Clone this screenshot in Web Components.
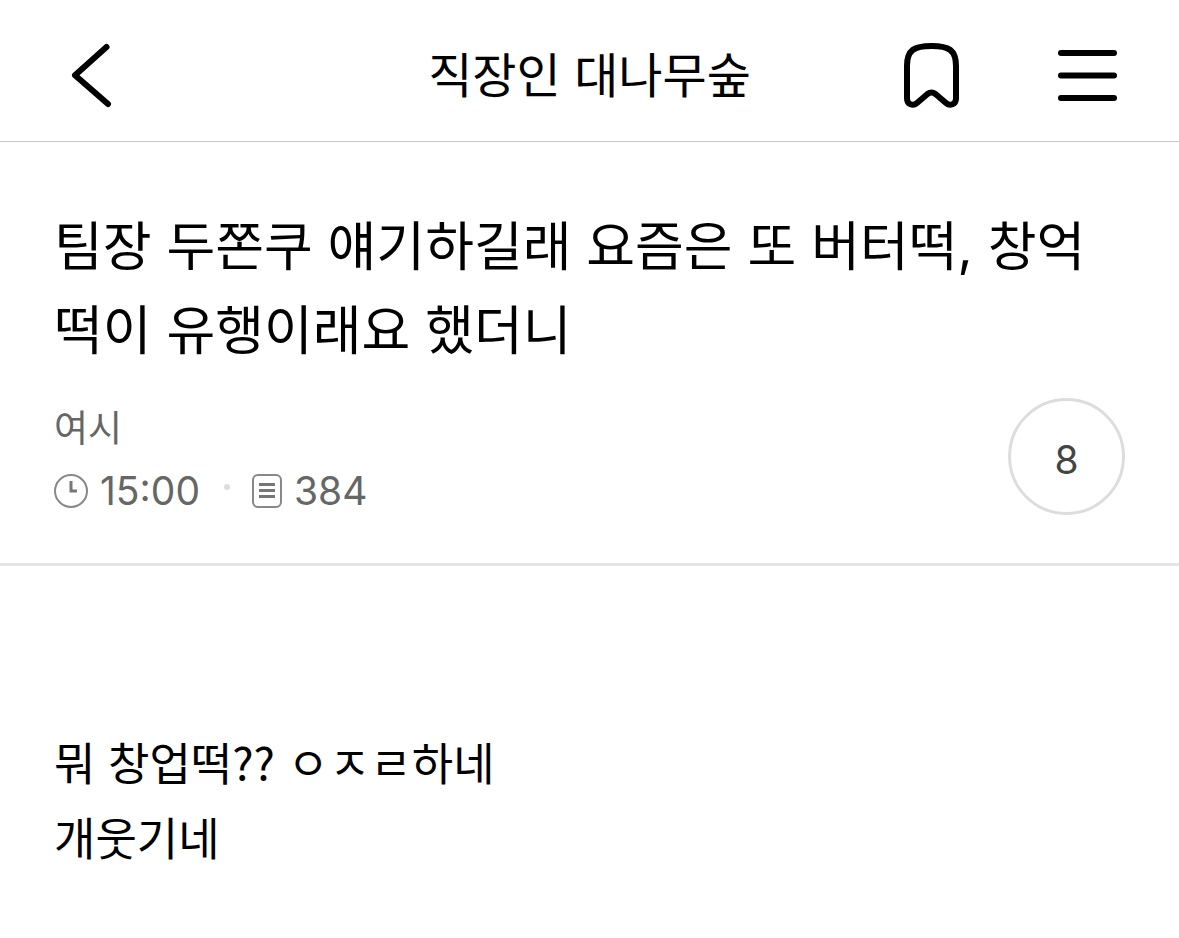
<!DOCTYPE html>
<html lang="ko">
<head>
<meta charset="utf-8">
<meta name="viewport" content="width=device-width, initial-scale=1">
<title>직장인 대나무숲</title>
<style>
    body {
        margin: 0;
        background: #fff;
        color: #000;
        font-family: Inter, "Noto Sans CJK KR", sans-serif;
    }
</style>
</head>
<body>
<board-header>직장인 대나무숲</board-header>
<main>
    <post-heading comments="8">
        팀장 두쫀쿠 얘기하길래 요즘은 또 버터떡, 창억떡이 유행이래요 했더니
        <span slot="author">여시</span>
        <time slot="time">15:00</time>
        <span slot="views">384</span>
    </post-heading>
    <post-body>
        <p>뭐 창업떡?? ㅇㅈㄹ하네</p>
        <p>개웃기네</p>
    </post-body>
</main>

<script>
class BoardHeader extends HTMLElement {

    constructor() {
        super();
        this.shadowDOM = this.attachShadow({mode: 'open'});
    }

    connectedCallback() {
        this.render();
    }

    render() {
        this.shadowDOM.innerHTML =
        `
        <style>
            * {
                margin: 0;
                padding: 0;
                box-sizing: border-box;
            }
            :host {
                display: block;
                border-bottom: 1px solid #c8c8c8;
            }
            header {
                display: grid;
                grid-template-columns: 1fr auto 1fr;
                align-items: center;
                padding: 32px 54px 21px;
            }
            h1 {
                font-size: 48px;
                font-weight: 400;
                line-height: 88px;
            }
            .actions {
                display: flex;
                justify-content: flex-end;
                gap: 76px;
            }
            button {
                display: block;
                border: 0;
                background: none;
                color: inherit;
                cursor: pointer;
            }
            .back {
                justify-self: start;
            }
            svg {
                display: block;
                fill: none;
                stroke: currentColor;
                stroke-width: 6;
                stroke-linecap: round;
                stroke-linejoin: round;
            }
        </style>

        <header>
            <button class="back" type="button" aria-label="뒤로">
                <svg width="80" height="88" viewBox="0 0 80 88"><path d="M52.5 15 21 43.3l33 28.7"/></svg>
            </button>
            <h1><slot></slot></h1>
            <div class="actions">
                <button type="button" aria-label="북마크">
                    <svg width="80" height="88" viewBox="0 0 80 88"><path d="M18 34C18 18 25 14 42.5 14S67 18 67 34V66.500C67 72.500 61 74.500 57 71L46.500 62Q42.500 59 38.500 62L28 71C24 74.500 18 72.500 18 66.500Z"/></svg>
                </button>
                <button type="button" aria-label="메뉴">
                    <svg width="80" height="88" viewBox="0 0 80 88"><path d="M16 21h53M16 43.500h53M16 66h53"/></svg>
                </button>
            </div>
        </header>
        `;
    }
}

class PostHeading extends HTMLElement {

    constructor() {
        super();
        this.shadowDOM = this.attachShadow({mode: 'open'});
    }

    connectedCallback() {
        this.render();
    }

    render() {
        this.shadowDOM.innerHTML =
        `
        <style>
            * {
                margin: 0;
                padding: 0;
                box-sizing: border-box;
            }
            :host {
                display: block;
                padding: 63px 54px 42px;
                border-bottom: 3px solid #e5e5e5;
            }
            h2 {
                font-size: 53px;
                font-weight: 400;
                line-height: 84px;
                word-break: break-all;
            }
            .info {
                display: flex;
                align-items: flex-start;
                justify-content: space-between;
                margin-top: 25px;
                color: #666;
                font-size: 39px;
            }
            .author {
                font-size: 37px;
                line-height: 62px;
            }
            .stats {
                line-height: 61px;
            }
            .stats, .stat {
                display: flex;
                align-items: center;
            }
            .stat {
                gap: 12px;
            }
            .dot {
                width: 6px;
                height: 6px;
                margin: 0 22px 8px 24px;
                border-radius: 50%;
                background: #ddd;
            }
            svg {
                display: block;
                fill: none;
                stroke: #888;
                stroke-width: 2;
            }
            .mark {
                stroke: #777;
                stroke-width: 3;
            }
            button {
                width: 117px;
                height: 117px;
                padding-top: 6px;
                border: 3px solid #ddd;
                border-radius: 50%;
                background: none;
                color: #444;
                font: inherit;
                cursor: pointer;
            }
        </style>

        <h2><slot></slot></h2>
        <div class="info">
            <div>
                <div class="author"><slot name="author"></slot></div>
                <div class="stats">
                    <span class="stat">
                        <svg width="34" height="34" viewBox="0 0 34 34"><circle cx="17" cy="17" r="16"/><path class="mark" d="M17 7v10h6"/></svg>
                        <slot name="time"></slot>
                    </span>
                    <span class="dot"></span>
                    <span class="stat">
                        <svg width="30" height="34" viewBox="0 0 30 34"><rect x="1" y="1" width="28" height="32" rx="5"/><path class="mark" d="M7 10.500h16M7 16.500h16M7 22.500h16"/></svg>
                        <slot name="views"></slot>
                    </span>
                </div>
            </div>
            <button type="button" aria-label="댓글 ${this.getAttribute('comments')}">${this.getAttribute('comments')}</button>
        </div>
        `;
    }
}

class PostBody extends HTMLElement {

    constructor() {
        super();
        this.shadowDOM = this.attachShadow({mode: 'open'});
    }

    connectedCallback() {
        this.render();
    }

    render() {
        this.shadowDOM.innerHTML =
        `
        <style>
            :host {
                display: block;
                padding: 158px 54px 60px;
                font-family: "Noto Sans CJK KR", sans-serif;
                font-size: 45px;
                line-height: 75px;
            }
            ::slotted(p) {
                margin: 0;
            }
        </style>

        <slot></slot>
        `;
    }
}

customElements.define('board-header', BoardHeader);
customElements.define('post-heading', PostHeading);
customElements.define('post-body', PostBody);
</script>
</body>
</html>
